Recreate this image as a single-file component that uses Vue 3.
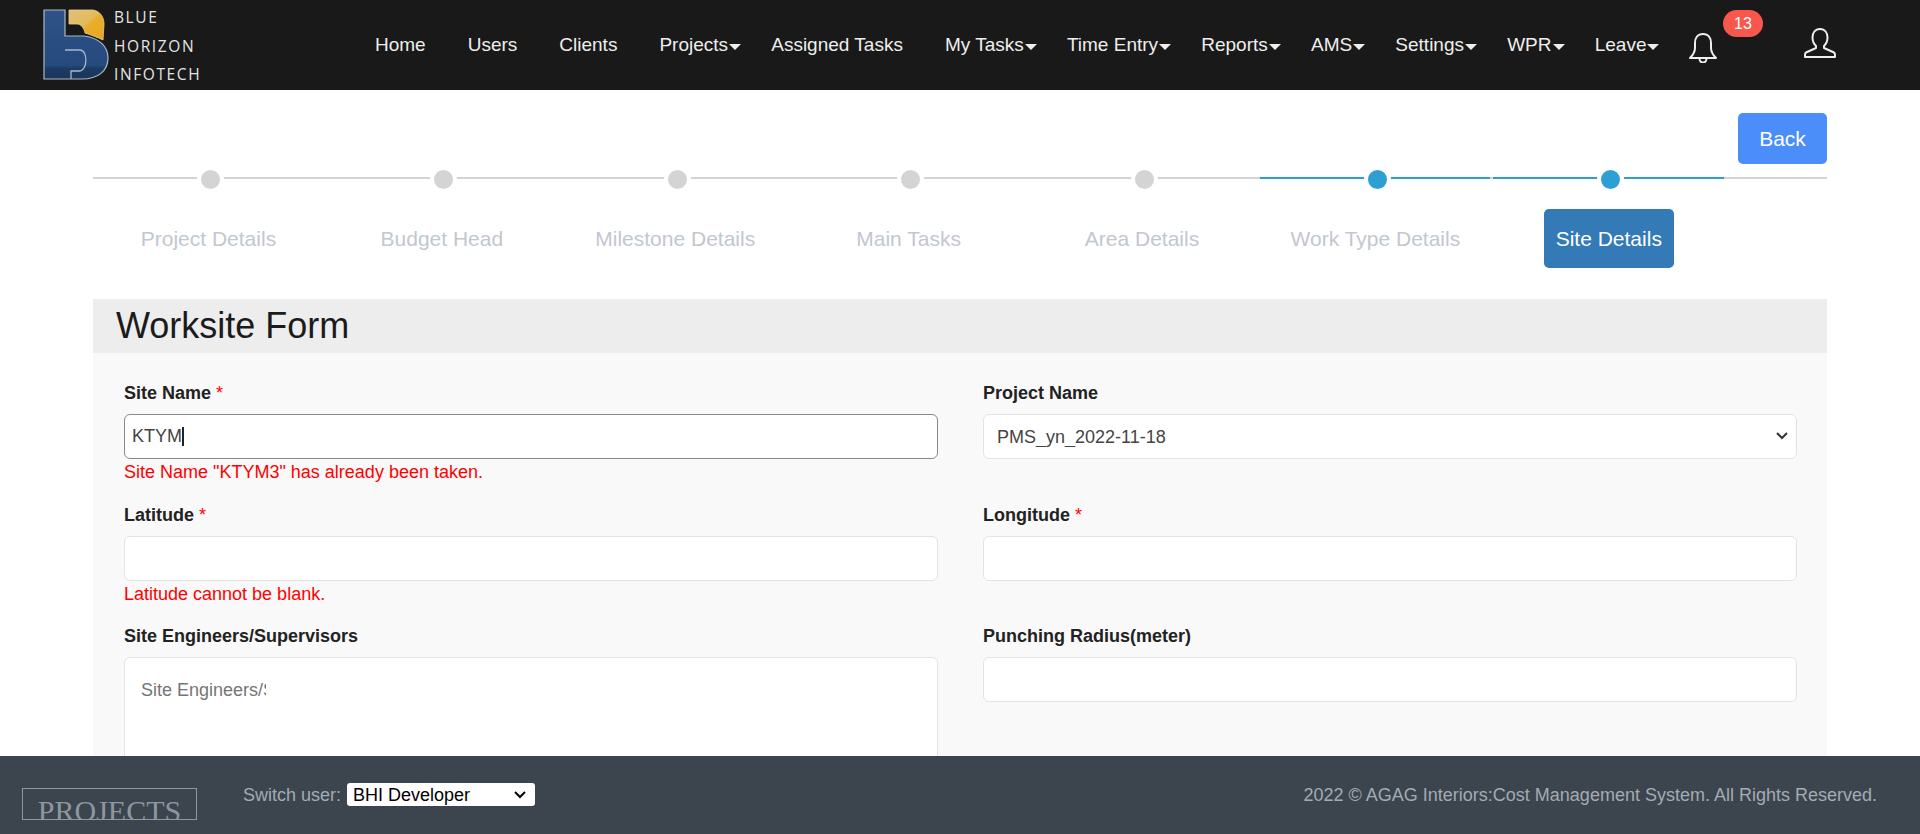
<template>
  <div class="page">
    <header class="topbar">
      <div class="brand">
        <svg class="logo" viewBox="43 9 66 72" width="66" height="72">
          <defs>
            <linearGradient id="blueFill" x1="0" y1="0" x2="0" y2="1">
              <stop offset="0" stop-color="#2f5288" />
              <stop offset="0.8" stop-color="#264a7c" />
              <stop offset="0.85" stop-color="#1d3a63" />
              <stop offset="1" stop-color="#1b3559" />
            </linearGradient>
            <linearGradient id="goldFill" x1="0" y1="0" x2="1" y2="1">
              <stop offset="0" stop-color="#dfc07a" />
              <stop offset="0.45" stop-color="#e2bc5c" />
              <stop offset="0.55" stop-color="#e9ad27" />
              <stop offset="1" stop-color="#e6a920" />
            </linearGradient>
          </defs>
          <path
            d="M44 10H65V36H84C100 38 108 47 108 58C108 71 98 79 82 79H44Z"
            fill="url(#blueFill)"
            stroke="#a9b7c9"
            stroke-width="1.2"
          />
          <path d="M65 50H80C88 50 88 71 79 71H71V79" fill="none" stroke="#a9b7c9" stroke-width="1.3" />
          <path
            d="M69 10H93C100 11 104 17 104 24L103 40C97 37 91 35 85 33C84 28 81 24 77 24H69Z"
            fill="url(#goldFill)"
            stroke="#e6cf96"
            stroke-width="0.8"
          />
        </svg>
        <div class="brand-text">
          <span>BLUE</span>
          <span>HORIZON</span>
          <span>INFOTECH</span>
        </div>
      </div>

      <nav class="menu">
        <a v-for="item in menu" :key="item.label" class="menu-item" :class="{ 'has-caret': item.caret }">
          {{ item.label }}<i v-if="item.caret" class="caret"></i>
        </a>
      </nav>

      <div class="bell">
        <svg viewBox="0 0 28 30" width="28" height="30" fill="none" stroke="#eee" stroke-width="2" stroke-linejoin="round">
          <path d="M14 1C8.500 1 6 5 6 10V15C6 19 4 22 1 25H27C24 22 22 19 22 15V10C22 5 19.500 1 14 1Z" />
          <path d="M10.500 25.500C10.500 28 12 29.500 14 29.500S17.500 28 17.500 25.500" />
        </svg>
        <span class="badge">13</span>
      </div>

      <svg class="user" viewBox="0 0 32 30" width="32" height="30" fill="none" stroke="#eee" stroke-width="2" stroke-linejoin="round">
        <path d="M16 1C11 1 8.500 5 8.500 9.500C8.500 13 10 16 12 18V20L2 24.500C1 25 1 26 1 27V29H31V27C31 26 31 25 30 24.500L20 20V18C22 16 23.500 13 23.500 9.500C23.500 5 21 1 16 1Z" />
      </svg>
    </header>

    <main class="content">
      <div class="actions">
        <button class="back">Back</button>
      </div>

      <div class="stepper">
        <div v-for="(step, i) in steps" :key="step" class="step" :class="{ done: i >= 5, current: i === 6 }">
          <div class="track"><span class="dot"></span></div>
          <div class="step-label"><span>{{ step }}</span></div>
        </div>
      </div>

      <section class="panel">
        <h1 class="panel-title">Worksite Form</h1>
        <form class="form-grid">
          <div class="field">
            <label>Site Name <b>*</b></label>
            <div class="input-wrap">
              <input class="focused" value="KTYM" />
              <span class="text-caret"></span>
            </div>
            <p class="error">Site Name "KTYM3" has already been taken.</p>
          </div>
          <div class="field">
            <label>Project Name</label>
            <div class="select-wrap">
              <select>
                <option>PMS_yn_2022-11-18</option>
              </select>
              <svg class="chevron" viewBox="0 0 12 8" width="12" height="8" fill="none" stroke="#333" stroke-width="2">
                <path d="M1 1L6 6L11 1" />
              </svg>
            </div>
          </div>
          <div class="field">
            <label>Latitude <b>*</b></label>
            <input />
            <p class="error">Latitude cannot be blank.</p>
          </div>
          <div class="field">
            <label>Longitude <b>*</b></label>
            <input />
          </div>
          <div class="field">
            <label>Site Engineers/Supervisors</label>
            <div class="multi">
              <input placeholder="Site Engineers/Supervisors" />
            </div>
          </div>
          <div class="field">
            <label>Punching Radius(meter)</label>
            <input />
          </div>
        </form>
      </section>
    </main>

    <footer class="footer">
      <div class="footer-logo"><span>PROJECTS</span></div>
      <div class="switch">
        <span class="switch-label">Switch user:</span>
        <div class="select-wrap">
          <select>
            <option>BHI Developer</option>
          </select>
          <svg class="chevron" viewBox="0 0 12 8" width="12" height="8" fill="none" stroke="#000" stroke-width="2">
            <path d="M1 1L6 6L11 1" />
          </svg>
        </div>
      </div>
      <div class="copy">2022 © AGAG Interiors:Cost Management System. All Rights Reserved.</div>
    </footer>
  </div>
</template>

<script setup>
const menu = [
  { label: 'Home' },
  { label: 'Users' },
  { label: 'Clients' },
  { label: 'Projects', caret: true },
  { label: 'Assigned Tasks' },
  { label: 'My Tasks', caret: true },
  { label: 'Time Entry', caret: true },
  { label: 'Reports', caret: true },
  { label: 'AMS', caret: true },
  { label: 'Settings', caret: true },
  { label: 'WPR', caret: true },
  { label: 'Leave', caret: true },
]

const steps = [
  'Project Details',
  'Budget Head',
  'Milestone Details',
  'Main Tasks',
  'Area Details',
  'Work Type Details',
  'Site Details',
]
</script>

<style>
html,
body {
  margin: 0;
  overflow: hidden;
}
</style>

<style scoped>
.page {
  display: flex;
  flex-direction: column;
  height: 834px;
  overflow: hidden;
  background: #fff;
  font-family: "Liberation Sans", Arial, sans-serif;
  color: #333;
}

.topbar {
  display: flex;
  align-items: center;
  flex: none;
  height: 90px;
  background: #191919;
  color: #eee;
}

.brand {
  display: flex;
  align-items: center;
  width: 375px;
  padding-left: 43px;
  box-sizing: border-box;
}

.logo {
  flex: none;
}

.brand-text {
  display: flex;
  flex-direction: column;
  margin-left: 5px;
  padding-top: 2px;
  font-family: "Open Sans", sans-serif;
  font-size: 15.5px;
  line-height: 28.5px;
  letter-spacing: 1.6px;
  color: #e4e4e4;
}

.menu {
  display: flex;
  width: 1314px;
  font-size: 19px;
}

.menu-item {
  display: inline-flex;
  align-items: center;
  margin-right: 42px;
  white-space: nowrap;
}

.menu-item.has-caret {
  margin-right: 30.2px;
}

.caret {
  width: 0;
  height: 0;
  margin-top: 3px;
  margin-left: 1px;
  border-left: 6px solid transparent;
  border-right: 6px solid transparent;
  border-top: 6px solid #eee;
}

.bell {
  position: relative;
  width: 28px;
  height: 30px;
  margin-top: 6px;
}

.badge {
  position: absolute;
  left: 34px;
  top: -23px;
  width: 40px;
  height: 27px;
  border-radius: 14px;
  background: #f9574b;
  color: #fff;
  font-size: 16px;
  line-height: 27px;
  text-align: center;
}

.user {
  margin-left: 87px;
  margin-top: -4px;
}

.content {
  flex: 1;
  min-height: 0;
  overflow: hidden;
  padding: 0 93px;
}

.actions {
  display: flex;
  justify-content: flex-end;
  padding-top: 23px;
}

.back {
  width: 89px;
  height: 51px;
  border: 0;
  border-radius: 5px;
  background: #4b8ef9;
  color: #fff;
  font-family: inherit;
  font-size: 21px;
}

.stepper {
  position: relative;
  display: flex;
  margin-top: 3px;
}

.stepper::before {
  content: "";
  position: absolute;
  left: 0;
  right: 0;
  top: 10px;
  height: 2px;
  background: #d3d3d3;
}

.step {
  position: relative;
  width: 233.4px;
}

.track {
  position: relative;
  height: 22px;
}

.done .track::before {
  content: "";
  position: absolute;
  left: 0;
  right: 3px;
  top: 10px;
  height: 2px;
  background: #2e9fd3;
}

.dot {
  position: absolute;
  left: 50%;
  top: 0;
  width: 19px;
  height: 19px;
  margin-left: -12.7px;
  margin-top: -1px;
  border: 4px solid #fff;
  border-radius: 50%;
  background: #d4d4d4;
}

.done .dot {
  background: #2e9fd3;
}

.step-label {
  display: flex;
  justify-content: center;
  margin-top: 20px;
  padding-right: 2.5px;
  color: #c2c7d0;
  font-size: 21px;
}

.step-label span {
  display: block;
  height: 59px;
  line-height: 60px;
  padding: 0 12px;
  border-radius: 5px;
  white-space: nowrap;
}

.current .step-label span {
  background: #337ab7;
  color: #fff;
}

.panel {
  min-height: 560px;
  margin-top: 31px;
  background: #f9f9f9;
}

.panel-title {
  margin: 0;
  height: 54px;
  padding-left: 23px;
  background: #ededed;
  color: #1b1b1b;
  font-size: 36px;
  font-weight: 400;
  line-height: 54px;
}

.form-grid {
  display: grid;
  grid-template-columns: 814px 814px;
  grid-auto-rows: 121.5px;
  column-gap: 45px;
  padding: 29px 30px 0 31px;
}

.field {
  min-width: 0;
}

.field label {
  display: block;
  height: 22px;
  margin-bottom: 10px;
  color: #222;
  font-size: 18px;
  font-weight: 700;
  line-height: 22px;
}

.field label b {
  color: #f00;
  font-weight: 400;
}

.field input,
.field select {
  display: block;
  width: 100%;
  height: 45px;
  box-sizing: border-box;
  border: 1px solid #e3e3e3;
  border-radius: 6px;
  background-color: #fff;
  color: #444;
  font-family: inherit;
  font-size: 18px;
  outline: none;
}

.field input {
  padding: 0 7px;
}

.field select {
  appearance: none;
  padding: 0 30px 0 13px;
}

.select-wrap {
  position: relative;
}

.chevron {
  position: absolute;
  right: 9px;
  top: 18px;
  pointer-events: none;
}

.field input.focused {
  border-color: #888;
}

.input-wrap {
  position: relative;
}

.text-caret {
  position: absolute;
  left: 58px;
  top: 13px;
  width: 2px;
  height: 19px;
  background: #222;
}

.error {
  margin: 2px 0 0;
  color: #f00;
  font-size: 18px;
  line-height: 22px;
}

.multi {
  height: 160px;
  box-sizing: border-box;
  padding: 22px 16px;
  border: 1px solid #e3e3e3;
  border-radius: 6px;
  background: #fff;
}

.field .multi input {
  width: 125px;
  height: 20px;
  padding: 0;
  border: 0;
  border-radius: 0;
  background: transparent;
}

.footer {
  display: flex;
  align-items: flex-start;
  flex: none;
  position: relative;
  height: 78px;
  background: #3c444d;
  color: #a3abb4;
  font-size: 18px;
}

.footer-logo {
  flex: none;
  width: 175px;
  height: 32px;
  box-sizing: border-box;
  margin: 32px 0 0 22px;
  overflow: hidden;
  border: 1px solid #8d96a1;
  color: #8d96a1;
  font-family: "Liberation Serif", serif;
  font-size: 30px;
  line-height: 44px;
  text-align: center;
}

.switch {
  display: flex;
  align-items: center;
  gap: 6px;
  margin: 27px 0 0 46px;
}

.switch-label {
  margin-top: 2px;
}

.switch select {
  display: block;
  appearance: none;
  width: 188px;
  height: 23px;
  box-sizing: border-box;
  border: 0;
  border-radius: 3px;
  background: #fff;
  color: #000;
  font-family: inherit;
  font-size: 18px;
  padding: 0 0 0 6px;
}

.switch .chevron {
  right: 9px;
  top: 8px;
}

.copy {
  margin: 27px 43px 0 auto;
  line-height: 24px;
}
</style>
